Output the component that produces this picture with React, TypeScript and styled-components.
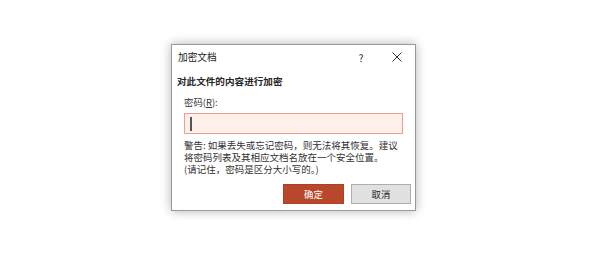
import React from "react";
import styled, { createGlobalStyle } from "styled-components";

const Global = createGlobalStyle`
  html, body { margin: 0; padding: 0; background: #ffffff; }
  body { font-family: "Noto Sans CJK SC", "Noto Sans", sans-serif; }
`;

const Page = styled.div`
  width: 607px;
  height: 261px;
  padding: 44px 0 0 171px;
  box-sizing: border-box;
`;

const Dialog = styled.div`
  width: 245px;
  height: 167px;
  box-sizing: border-box;
  border: 1px solid #9a9a9a;
  background: #ffffff;
  box-shadow: 0 0 10px rgba(0, 0, 0, 0.3);
  display: flex;
  flex-direction: column;
`;

const TitleBar = styled.div`
  height: 24px;
  display: flex;
  align-items: center;
  padding-left: 6px;
`;

const Title = styled.div`
  font-size: 9.7px;
  color: #222;
  flex: 1;
`;

const TitleButton = styled.div`
  width: 36px;
  height: 24px;
  display: flex;
  align-items: center;
  justify-content: center;
  font-size: 10px;
  color: #222;
`;

const Body = styled.div`
  display: flex;
  flex-direction: column;
  padding: 6px 12px 0 12px;
`;

const Heading = styled.div`
  margin-left: -7px;
  font-size: 9.6px;
  line-height: 12px;
  font-weight: 700;
  color: #262626;
`;

const Label = styled.div`
  margin-top: 9px;
  font-size: 9.4px;
  line-height: 12px;
  color: #333;
  u { text-decoration: underline; }
`;

const Input = styled.div`
  margin-top: 5px;
  height: 21px;
  width: 219px;
  box-sizing: border-box;
  border: 1px solid #f0a090;
  background: #fdefea;
  display: flex;
  align-items: center;
  padding-left: 5px;
`;

const Caret = styled.span`
  width: 1.5px;
  height: 14px;
  background: #555;
`;

const Warning = styled.div`
  margin-top: 5px;
  display: flex;
  flex-direction: column;
`;

const WarningLine = styled.div`
  height: 12px;
  display: flex;
  align-items: center;
  font-size: 9.5px;
  line-height: 12px;
  color: #333;
  white-space: nowrap;
`;

const Buttons = styled.div`
  display: flex;
  justify-content: flex-end;
  gap: 7px;
  margin-top: 9px;
  padding-right: 4px;
`;

const Button = styled.div<{ $primary?: boolean }>`
  width: ${(p) => (p.$primary ? "61px" : "60px")};
  height: 20px;
  box-sizing: border-box;
  display: flex;
  align-items: center;
  justify-content: center;
  font-size: 9.4px;
  border: 1px solid ${(p) => (p.$primary ? "#b03e22" : "#adadad")};
  background: ${(p) => (p.$primary ? "#b9472b" : "#e1e1e1")};
  color: ${(p) => (p.$primary ? "#ffffff" : "#222")};
`;

export default function App() {
  return (
    <>
      <Global />
      <Page>
        <Dialog>
          <TitleBar>
            <Title>加密文档</Title>
            <TitleButton>?</TitleButton>
            <TitleButton>
              <svg width="10" height="10" viewBox="0 0 10 10">
                <path d="M0.5 0.5 L9.5 9.5 M9.5 0.5 L0.5 9.5" stroke="#333" strokeWidth="1" />
              </svg>
            </TitleButton>
          </TitleBar>
          <Body>
            <Heading>对此文件的内容进行加密</Heading>
            <Label>
              密码(<u>R</u>):
            </Label>
            <Input>
              <Caret />
            </Input>
            <Warning>
              <WarningLine>警告: 如果丢失或忘记密码，则无法将其恢复。建议</WarningLine>
              <WarningLine>将密码列表及其相应文档名放在一个安全位置。</WarningLine>
              <WarningLine>(请记住，密码是区分大小写的。)</WarningLine>
            </Warning>
          </Body>
          <Buttons>
            <Button $primary>确定</Button>
            <Button>取消</Button>
          </Buttons>
        </Dialog>
      </Page>
    </>
  );
}
